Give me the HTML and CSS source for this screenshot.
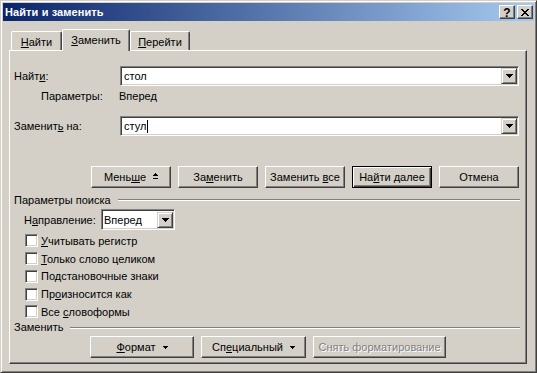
FILE: index.html
```html
<!DOCTYPE html>
<html lang="ru">
<head>
<meta charset="utf-8">
<title>Найти и заменить</title>
<link rel="stylesheet" href="styles.css">
</head>
<body>
<div class="window">
  <div class="titlebar">
    <span class="title">Найти и заменить</span>
    <div class="tbtns">
      <span class="tbtn help">?</span>
      <span class="tbtn"><svg width="8" height="7" viewBox="0 0 8 7"><path d="M0 0h2v1h-2zM6 0h2v1h-2zM1 1h2v1h-2zM5 1h2v1h-2zM2 2h4v1h-4zM3 3h2v1h-2zM2 4h4v1h-4zM1 5h2v1h-2zM5 5h2v1h-2zM0 6h2v1h-2zM6 6h2v1h-2z" fill="#000"/></svg></span>
    </div>
  </div>
  <div class="body">
    <div class="tabs">
      <div class="tab tab1"><span><u>Н</u>айти</span></div>
      <div class="tab tab2 active"><span><u>З</u>аменить</span></div>
      <div class="tab tab3"><span><u>П</u>ерейти</span></div>
    </div>
    <div class="panel">
      <div class="field-row find-row">
        <span class="field-label">Найт<u>и</u>:</span>
        <div class="combo">
          <span class="combo-text">стол</span>
          <span class="dd"><svg width="7" height="4" viewBox="0 0 7 4"><path d="M0 0h7v1h-1v1h-1v1h-1v1h-1v-1h-1v-1h-1v-1h-1z" fill="#000"/></svg></span>
        </div>
      </div>
      <div class="params-row">
        <span class="params-label">Параметры:</span>
        <span>Вперед</span>
      </div>
      <div class="field-row replace-row">
        <span class="field-label">Заменит<u>ь</u> на:</span>
        <div class="combo">
          <span class="combo-text">стул<span class="caret"></span></span>
          <span class="dd"><svg width="7" height="4" viewBox="0 0 7 4"><path d="M0 0h7v1h-1v1h-1v1h-1v1h-1v-1h-1v-1h-1v-1h-1z" fill="#000"/></svg></span>
        </div>
      </div>
      <div class="btn-row main-btns">
        <div class="btn"><span>Мень<u>ш</u>е</span><svg class="less-ico" width="5" height="6" viewBox="0 0 5 6"><path d="M2 0h1v1h1v1h1v1h-5v-1h1v-1h1zM0 5h5v1h-5z" fill="#000"/></svg></div>
        <div class="btn"><span>За<u>м</u>енить</span></div>
        <div class="btn"><span>Заменить <u>в</u>се</span></div>
        <div class="btn default"><span>На<u>й</u>ти далее</span></div>
        <div class="btn"><span>Отмена</span></div>
      </div>
      <div class="group-head search-head">
        <span>Параметры поиска</span>
        <span class="line"></span>
      </div>
      <div class="dir-row">
        <span class="dir-label">Н<u>а</u>правление:</span>
        <div class="select">
          <span class="combo-text">Вперед</span>
          <span class="dd"><svg width="7" height="4" viewBox="0 0 7 4"><path d="M0 0h7v1h-1v1h-1v1h-1v1h-1v-1h-1v-1h-1v-1h-1z" fill="#000"/></svg></span>
        </div>
      </div>
      <div class="checks">
        <div class="check"><span class="cb"></span><span><u>У</u>читывать регистр</span></div>
        <div class="check"><span class="cb"></span><span><u>Т</u>олько слово целиком</span></div>
        <div class="check"><span class="cb"></span><span>Подстановочные знаки</span></div>
        <div class="check"><span class="cb"></span><span>Пр<u>о</u>износится как</span></div>
        <div class="check"><span class="cb"></span><span>Все <u>с</u>ловоформы</span></div>
      </div>
      <div class="group-head replace-head">
        <span>Заменить</span>
        <span class="line"></span>
      </div>
      <div class="btn-row bottom-btns">
        <div class="btn w-format"><span><u>Ф</u>ормат</span><svg class="tri" width="5" height="3" viewBox="0 0 5 3"><path d="M0 0h5v1h-1v1h-1v1h-1v-1h-1v-1h-1z" fill="#000"/></svg></div>
        <div class="btn w-special"><span>Сп<u>е</u>циальный</span><svg class="tri" width="5" height="3" viewBox="0 0 5 3"><path d="M0 0h5v1h-1v1h-1v1h-1v-1h-1v-1h-1z" fill="#000"/></svg></div>
        <div class="btn w-clear disabled"><span>Снять форматирование</span></div>
      </div>
    </div>
  </div>
</div>
</body>
</html>
```

FILE: styles.css
```css
html, body {
  margin: 0;
  padding: 0;
  background: #d4d0c8;
}
body {
  font-family: "Liberation Sans", Arial, sans-serif;
  font-size: 11px;
  color: #000;
}
u {
  text-decoration: underline;
  text-underline-offset: 1px;
}
.window {
  width: 537px;
  height: 373px;
  box-sizing: border-box;
  background: #d4d0c8;
  border: 1px solid;
  border-color: #d4d0c8 #404040 #404040 #d4d0c8;
  box-shadow: inset 1px 1px #fff, inset -1px -1px #808080;
  padding: 2px;
  display: flex;
  flex-direction: column;
}
.titlebar {
  height: 18px;
  flex: none;
  background: linear-gradient(to right, #0a246a, #a6caf0);
  display: flex;
  align-items: center;
  padding: 0 1px 0 2px;
  color: #fff;
  font-weight: bold;
}
.title {
  letter-spacing: 0.1px;
}
.tbtns {
  margin-left: auto;
  display: flex;
  gap: 2px;
}
.tbtn {
  width: 16px;
  height: 14px;
  box-sizing: border-box;
  background: #d4d0c8;
  border: 1px solid;
  border-color: #fff #404040 #404040 #fff;
  box-shadow: inset -1px -1px #808080;
  display: flex;
  align-items: center;
  justify-content: center;
  color: #000;
}
.tbtn.help {
  font-size: 12px;
  font-weight: bold;
  line-height: 12px;
  padding-top: 1px;
}
.body {
  flex: 1;
  padding: 8px 0 0 6px;
}
.tabs {
  display: flex;
  align-items: flex-end;
  height: 21px;
}
.tab {
  box-sizing: border-box;
  height: 19px;
  border-top: 1px solid #fff;
  border-left: 1px solid #fff;
  border-right: 1px solid #404040;
  border-radius: 2px 2px 0 0;
  box-shadow: inset -1px 0 #808080;
  display: flex;
  align-items: center;
  justify-content: center;
  background: #d4d0c8;
  padding-top: 1px;
}
.tab1 {
  width: 51px;
  margin-left: 2px;
}
.tab2 {
  width: 68px;
}
.tab3 {
  width: 60px;
}
.tab.active {
  height: 22px;
  margin-bottom: -1px;
  position: relative;
  z-index: 1;
  padding-top: 0;
  padding-bottom: 2px;
}
.panel {
  width: 518px;
  height: 314px;
  box-sizing: border-box;
  border: 1px solid;
  border-color: #fff #404040 #404040 #fff;
  box-shadow: inset -1px -1px #808080;
  padding: 0 6px 0 4px;
  display: flex;
  flex-direction: column;
}
.field-row {
  display: flex;
  align-items: center;
  height: 20px;
}
.find-row {
  margin-top: 15px;
}
.replace-row {
  margin-top: 14px;
}
.field-label {
  width: 106px;
}
.combo, .select {
  height: 20px;
  box-sizing: border-box;
  background: #fff;
  border: 1px solid;
  border-color: #808080 #fff #fff #808080;
  box-shadow: inset 1px 1px #404040, inset -1px -1px #d4d0c8;
  display: flex;
  align-items: center;
  padding: 0 1px 0 3px;
}
.combo {
  width: 399px;
}
.combo-text {
  flex: 1;
  display: flex;
  align-items: center;
}
.caret {
  display: inline-block;
  width: 1px;
  height: 13px;
  background: #000;
  margin-left: 1px;
}
.dd {
  width: 16px;
  height: 16px;
  box-sizing: border-box;
  background: #d4d0c8;
  border: 1px solid;
  border-color: #d4d0c8 #404040 #404040 #d4d0c8;
  box-shadow: inset 1px 1px #fff, inset -1px -1px #808080;
  display: flex;
  align-items: center;
  justify-content: center;
  flex: none;
}
.params-row {
  margin-top: 3px;
  height: 13px;
  display: flex;
  align-items: center;
  padding-left: 27px;
}
.params-label {
  width: 78px;
}
.btn-row {
  display: flex;
  gap: 7px;
}
.main-btns {
  margin-top: 30px;
  padding-left: 77px;
}
.btn {
  height: 22px;
  width: 80px;
  box-sizing: border-box;
  border: 1px solid;
  border-color: #fff #404040 #404040 #fff;
  box-shadow: inset -1px -1px #808080;
  background: #d4d0c8;
  display: flex;
  align-items: center;
  justify-content: center;
  white-space: nowrap;
}
.btn.default {
  border-color: #000;
  box-shadow: inset 1px 1px #fff, inset -1px -1px #404040, inset -2px -2px #808080;
}
.less-ico {
  margin-left: 7px;
  margin-top: -2px;
}
.tri {
  margin-left: 7px;
  margin-top: 1px;
}
.btn.disabled {
  color: #808080;
  text-shadow: 1px 1px 0 #fff;
}
.w-format {
  width: 104px;
}
.w-special {
  width: 105px;
}
.w-clear {
  width: 133px;
}
.group-head {
  height: 13px;
  display: flex;
  align-items: center;
}
.search-head {
  margin-top: 5px;
}
.group-head .line {
  flex: 1;
  height: 0;
  border-top: 1px solid #808080;
  border-bottom: 1px solid #fff;
  margin-left: 7px;
  margin-top: 1px;
}
.dir-row {
  margin-top: 3px;
  height: 21px;
  display: flex;
  align-items: center;
  padding-left: 10px;
}
.dir-label {
  width: 77px;
}
.select {
  width: 74px;
  height: 21px;
  padding-left: 2px;
}
.checks {
  margin-top: 2px;
  display: flex;
  flex-direction: column;
}
.check {
  height: 17.75px;
  display: flex;
  align-items: center;
  padding-left: 11px;
}
.cb {
  width: 13px;
  height: 13px;
  box-sizing: border-box;
  background: #fff;
  border: 1px solid;
  border-color: #808080 #fff #fff #808080;
  box-shadow: inset 1px 1px #404040, inset -1px -1px #d4d0c8;
  margin-right: 3px;
  flex: none;
}
.replace-head {
  margin-top: 0;
}
.bottom-btns {
  margin-top: 2px;
  padding-left: 76px;
}
```
